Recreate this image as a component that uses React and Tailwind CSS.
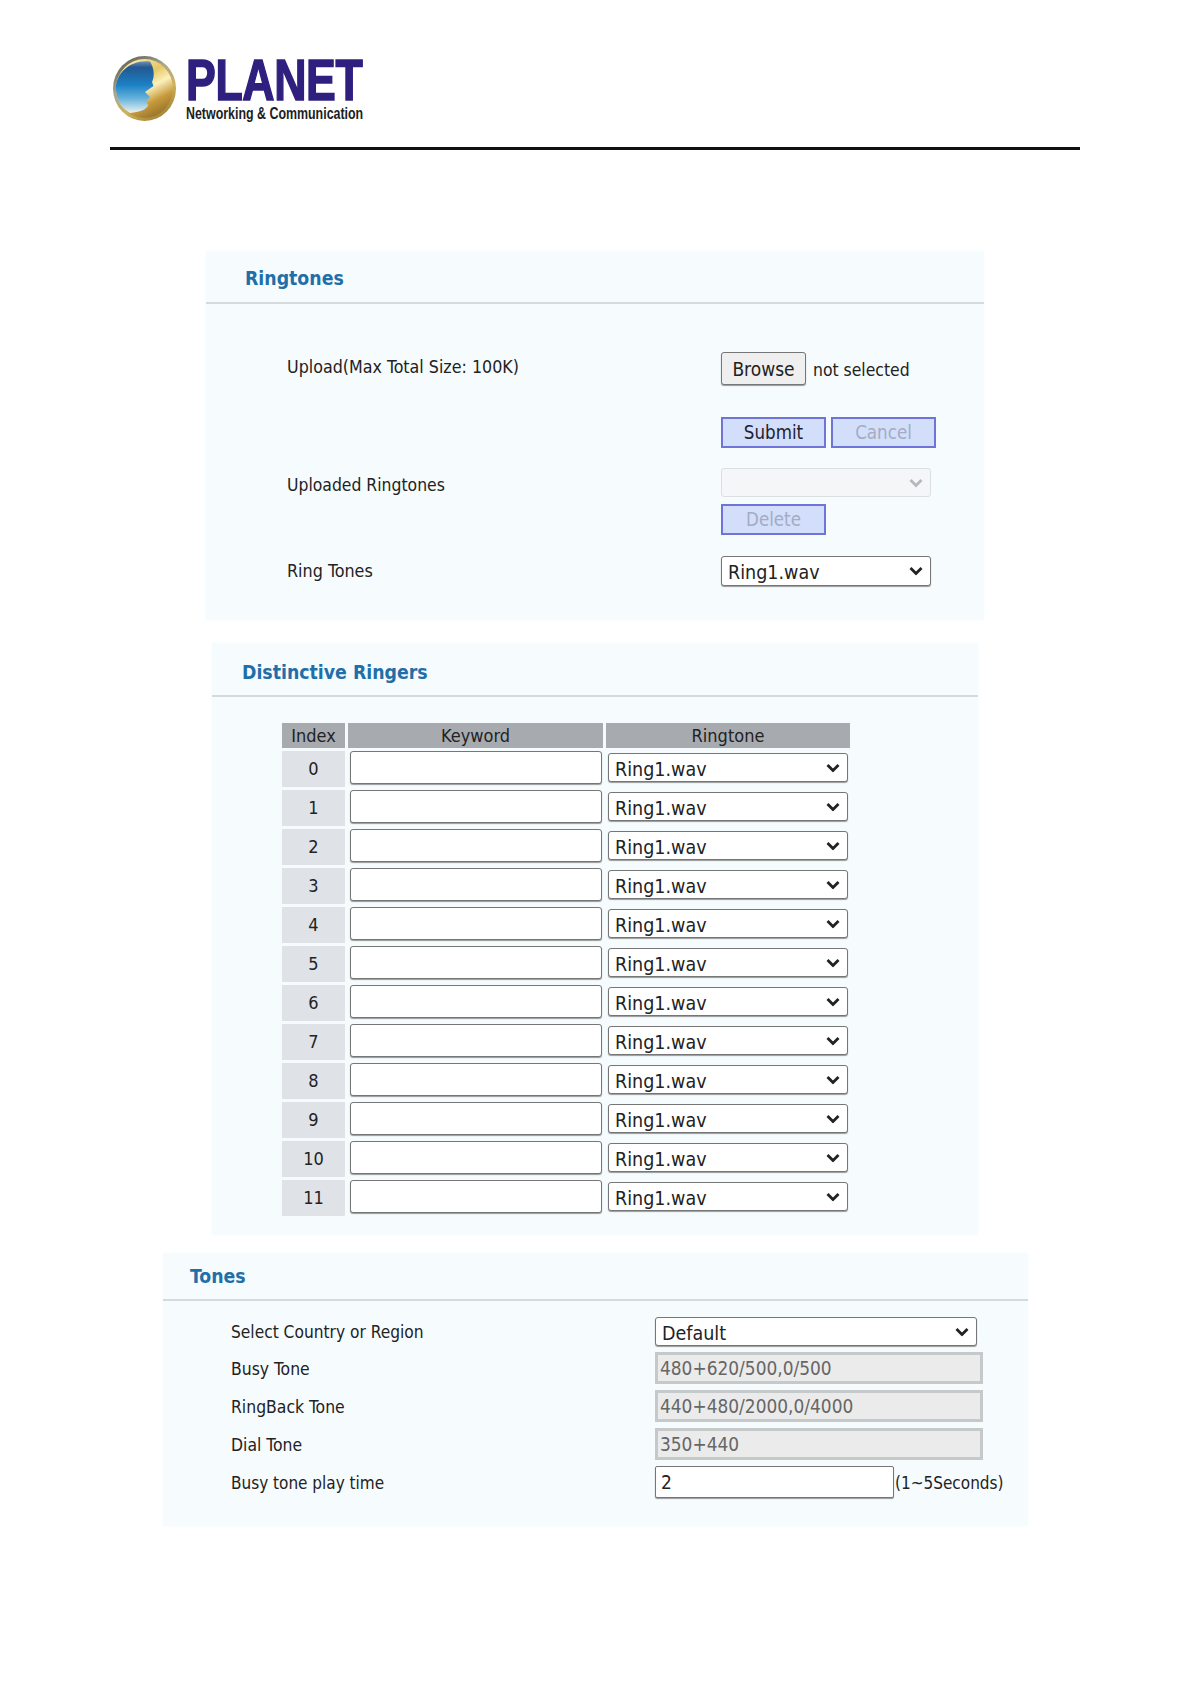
import React from 'react';

const font = 'font-["DejaVu_Sans_Condensed","DejaVu_Sans",sans-serif]';

const Chevron = ({ className = '' }) => (
  <svg
    width="14"
    height="9"
    viewBox="0 0 14 9"
    fill="none"
    className={`pointer-events-none absolute right-[8px] top-1/2 -translate-y-1/2 ${className}`}
  >
    <path d="M1.5 1.5 L7 7 L12.5 1.5" stroke="currentColor" strokeWidth="2.8" />
  </svg>
);

const Select = ({ value, className = '' }) => (
  <div className={`relative ${className}`}>
    <select
      defaultValue={value}
      className="h-full w-full appearance-none rounded-[3px] border border-[#767676] bg-white pl-[6px] pt-[1px] text-[19.5px] text-[#222] shadow-[0_1px_1px_#999]"
    >
      <option value={value}>{value}</option>
    </select>
    <Chevron className="text-[#222]" />
  </div>
);

const BlueButton = ({ children, disabled = false, className = '' }) => (
  <button
    disabled={disabled}
    className={`h-[31px] w-[105px] border-2 border-[#6f74d8] bg-[#d3defa] pt-[2px] text-[18.6px] leading-none ${disabled ? 'text-[#a3acc4]' : 'text-[#1d2233]'} ${className}`}
  >
    {children}
  </button>
);

const SectionHead = ({ title, className = '' }) => (
  <div className={`border-b-2 border-[#d3dbe0] ${className}`}>
    <h2 className="text-[19.3px] font-bold text-[#1f6fa8] leading-none">{title}</h2>
  </div>
);

const Logo = () => (
  <div className="flex items-start gap-[9px]">
    <svg width="65" height="67" viewBox="0 0 65 67" className="shrink-0">
      <defs>
        <linearGradient id="sea" x1="0" y1="0" x2="0" y2="1">
          <stop offset="0" stopColor="#6f93b8" />
          <stop offset="0.12" stopColor="#24588f" />
          <stop offset="0.45" stopColor="#1b7fc4" />
          <stop offset="0.72" stopColor="#66b2dc" />
          <stop offset="1" stopColor="#eef3ee" />
        </linearGradient>
        <linearGradient id="gold" x1="0.3" y1="0" x2="0.8" y2="1">
          <stop offset="0" stopColor="#f6e9a8" />
          <stop offset="0.3" stopColor="#e6c765" />
          <stop offset="0.5" stopColor="#fbf1bc" />
          <stop offset="0.72" stopColor="#c79a3c" />
          <stop offset="1" stopColor="#8a6a28" />
        </linearGradient>
        <linearGradient id="rim" x1="0" y1="0" x2="0.6" y2="1">
          <stop offset="0" stopColor="#4d4d42" />
          <stop offset="0.45" stopColor="#a9a78f" />
          <stop offset="0.75" stopColor="#cfb25a" />
          <stop offset="1" stopColor="#a88a3a" />
        </linearGradient>
      </defs>
      <ellipse cx="32.5" cy="33.5" rx="31.5" ry="32.5" fill="url(#rim)" />
      <ellipse cx="32.5" cy="33.5" rx="28.5" ry="29.5" fill="url(#gold)" />
      <path
        d="M38 6.5 C42 13 43 21 40 27 L41.5 31 L33 37 L38 42 L34 47 L36.5 50 C34 55 28 57 18 58 C8 52 4 43 4 33 C4 17 20 4 38 6.5 Z"
        fill="url(#sea)"
      />
    </svg>
    <div className="flex flex-col font-['Liberation_Sans',sans-serif] pt-[2px]">
      <div className="h-[46px] w-[177px]">
        <span className="block origin-top-left scale-x-[0.77] whitespace-nowrap text-[58px] font-bold leading-[46px] tracking-[-0.5px] text-[#2f1f7e] [-webkit-text-stroke:1.6px_#2f1f7e]">
          PLANET
        </span>
      </div>
      <div className="mt-[2px] h-[17px] w-[177px]">
        <span className="block origin-top-left scale-x-[0.73] whitespace-nowrap text-[17px] font-bold leading-[17px] text-[#1d1d24]">
          Networking &amp; Communication
        </span>
      </div>
    </div>
  </div>
);

const rowNumbers = [0, 1, 2, 3, 4, 5, 6, 7, 8, 9, 10, 11];

const toneRows = [
  { label: 'Busy Tone', value: '480+620/500,0/500' },
  { label: 'RingBack Tone', value: '440+480/2000,0/4000' },
  { label: 'Dial Tone', value: '350+440' },
];

export default function App() {
  return (
    <div className={`w-[1190px] h-[1684px] bg-white overflow-hidden ${font} text-[17px] text-[#222]`}>
      <div className="pl-[112px] pt-[55px]">
        <Logo />
      </div>
      <div className="ml-[110px] mt-[25px] h-[3px] w-[970px] bg-[#111]" />

      {/* Ringtones */}
      <section className="ml-[206px] mt-[101px] h-[369px] w-[778px] bg-[#f6fbfe] shadow-[0_0_4px_#f6fbfe]">
        <SectionHead title="Ringtones" className="h-[53px] pl-[39px] pt-[18px]" />
        <div className="flex pl-[81px] pt-[49px] text-[17.7px]">
          <div className="w-[434px] pt-[4px] leading-[20px]">Upload(Max Total Size: 100K)</div>
          <div className="flex flex-col items-start">
            <div className="-mt-[1px] flex items-center gap-[7px]">
              <button className="h-[33px] w-[85px] rounded-[3px] border border-[#767676] bg-[#efefef] pt-[2px] text-[19px] shadow-[0_1px_1px_#999]">
                Browse
              </button>
              <span className="pt-[3px] text-[17.4px] text-[#222]">not selected</span>
            </div>
            <div className="mt-[32px] flex gap-[5px]">
              <BlueButton>Submit</BlueButton>
              <BlueButton disabled>Cancel</BlueButton>
            </div>
          </div>
        </div>
        <div className="mt-[20px] flex pl-[81px] text-[17.4px]">
          <div className="w-[434px] pt-[7px] leading-[20px]">Uploaded Ringtones</div>
          <div className="flex flex-col items-start gap-[7px]">
            <div className="relative h-[29px] w-[210px]">
              <select
                disabled
                className="h-full w-full appearance-none rounded-[3px] border border-[#dcdfe0] bg-[#f4f6f7]"
              />
              <Chevron className="text-[#b5b9bb]" />
            </div>
            <BlueButton disabled>Delete</BlueButton>
          </div>
        </div>
        <div className="mt-[21px] flex items-center pl-[81px] text-[17.8px]">
          <div className="w-[434px] leading-[20px]">Ring Tones</div>
          <Select value="Ring1.wav" className="h-[30px] w-[210px]" />
        </div>
      </section>

      {/* Distinctive Ringers */}
      <section className="ml-[212px] mt-[23px] h-[592px] w-[766px] bg-[#f6fbfe] shadow-[0_0_4px_#f6fbfe]">
        <SectionHead title="Distinctive Ringers" className="h-[54px] pl-[30px] pt-[20px]" />
        <div className="pl-[70px] pt-[26px]">
          <div className="flex h-[25px] gap-[3px] text-center text-[18px] leading-[26px] text-[#222]">
            <div className="w-[63px] bg-[#a7abb0]">Index</div>
            <div className="w-[255px] bg-[#a7abb0]">Keyword</div>
            <div className="w-[244px] bg-[#a7abb0]">Ringtone</div>
          </div>
          <div className="mt-[3px] flex flex-col gap-[3px]">
            {rowNumbers.map((n) => (
              <div key={n} className="flex h-[36px] gap-[3px]">
                <div className="flex w-[63px] items-center justify-center bg-[#dfe3e8] pb-[1px] text-[18px]">{n}</div>
                <div className="flex w-[255px] items-start justify-center">
                  <input className="h-[33px] w-[252px] rounded-[3px] border border-[#767676] bg-white shadow-[0_1px_1px_#999]" />
                </div>
                <div className="flex w-[244px] items-start justify-center pt-[2px]">
                  <Select value="Ring1.wav" className="h-[29px] w-[240px]" />
                </div>
              </div>
            ))}
          </div>
        </div>
      </section>

      {/* Tones */}
      <section className="ml-[163px] mt-[18px] h-[273px] w-[865px] bg-[#f6fbfe] shadow-[0_0_4px_#f6fbfe]">
        <SectionHead title="Tones" className="h-[48px] pl-[27px] pt-[14px]" />
        <div className="pl-[68px] pt-[16px]">
          <div className="flex h-[29px] items-center">
            <div className="w-[424px] pt-[2px] text-[17.2px]">Select Country or Region</div>
            <Select value="Default" className="h-[29px] w-[322px]" />
          </div>
          <div className="mt-[6px] flex flex-col gap-[6px]">
            {toneRows.map((row) => (
              <div key={row.label} className="flex h-[32px] items-center">
                <div className="w-[424px] pt-[3px] text-[17.4px]">{row.label}</div>
                <input
                  readOnly
                  value={row.value}
                  className="h-[32px] w-[328px] border-[3px] border-[#c6c9ca] bg-[#ebebeb] pl-[2px] text-[18.9px] text-[#666]"
                />
              </div>
            ))}
            <div className="flex h-[32px] items-center">
              <div className="w-[424px] pt-[3px]">Busy tone play time</div>
              <input
                defaultValue="2"
                className="h-[32px] w-[239px] rounded-[2px] border border-[#767676] bg-white pl-[5px] text-[19px] shadow-[0_1px_1px_#999]"
              />
              <span className="pl-[1px] pt-[3px]">(1~5Seconds)</span>
            </div>
          </div>
        </div>
      </section>
    </div>
  );
}
